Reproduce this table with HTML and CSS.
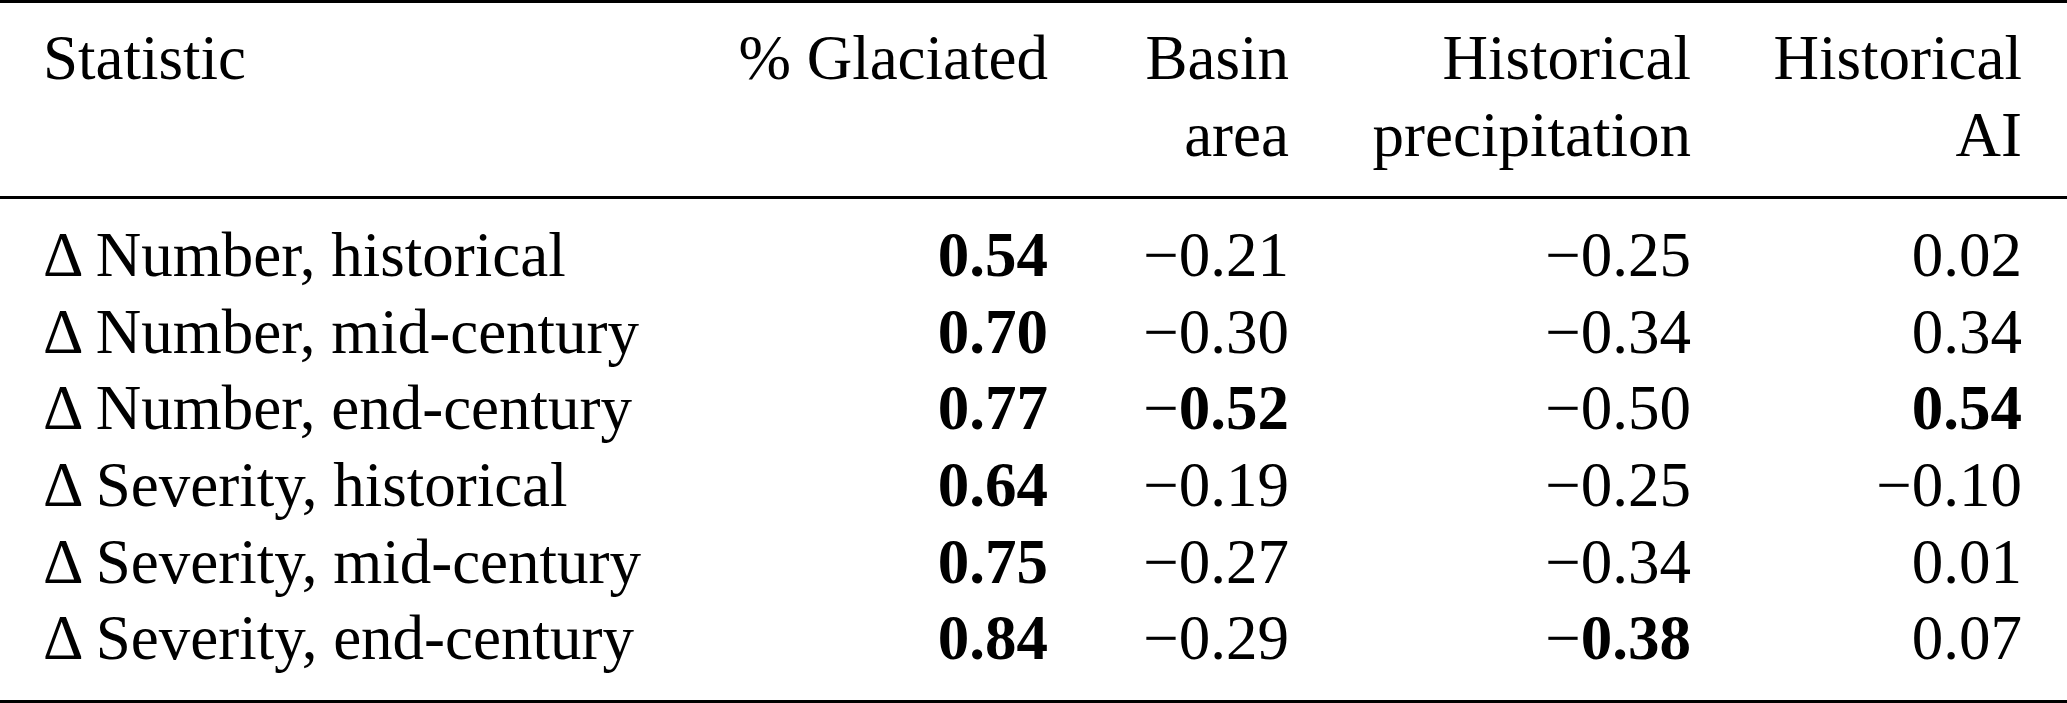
FILE: index.html
```html
<!DOCTYPE html>
<html lang="en">
<head>
<meta charset="utf-8">
<title>Correlation table</title>
<link rel="stylesheet" href="styles.css">
</head>
<body>
<div class="table">
  <div class="rule top"></div>
  <div class="grid head">
    <div class="cell left">Statistic</div>
    <div class="cell">% Glaciated</div>
    <div class="cell">Basin<br>area</div>
    <div class="cell">Historical<br>precipitation</div>
    <div class="cell">Historical<br>AI</div>
  </div>
  <div class="rule mid"></div>
  <div class="grid body">
    <div class="cell left">Δ Number, historical</div>
    <div class="cell b">0.54</div>
    <div class="cell">−0.21</div>
    <div class="cell">−0.25</div>
    <div class="cell">0.02</div>

    <div class="cell left">Δ Number, mid-century</div>
    <div class="cell b">0.70</div>
    <div class="cell">−0.30</div>
    <div class="cell">−0.34</div>
    <div class="cell">0.34</div>

    <div class="cell left">Δ Number, end-century</div>
    <div class="cell b">0.77</div>
    <div class="cell">−<b>0.52</b></div>
    <div class="cell">−0.50</div>
    <div class="cell b">0.54</div>

    <div class="cell left">Δ Severity, historical</div>
    <div class="cell b">0.64</div>
    <div class="cell">−0.19</div>
    <div class="cell">−0.25</div>
    <div class="cell">−0.10</div>

    <div class="cell left">Δ Severity, mid-century</div>
    <div class="cell b">0.75</div>
    <div class="cell">−0.27</div>
    <div class="cell">−0.34</div>
    <div class="cell">0.01</div>

    <div class="cell left">Δ Severity, end-century</div>
    <div class="cell b">0.84</div>
    <div class="cell">−0.29</div>
    <div class="cell">−<b>0.38</b></div>
    <div class="cell">0.07</div>
  </div>
  <div class="rule bottom"></div>
</div>
</body>
</html>
```

FILE: styles.css
```css
html, body {
  margin: 0;
  padding: 0;
  background: #ffffff;
}

body {
  width: 2067px;
  height: 703px;
  overflow: hidden;
  font-family: "Liberation Serif", "Times New Roman", serif;
  font-size: 63px;
  line-height: 76.6px;
  color: #000000;
}

.table {
  display: flex;
  flex-direction: column;
}

.rule {
  height: 3px;
  background: #000000;
}

.grid {
  display: grid;
  grid-template-columns: 605px 400px 241px 402px 331px;
  padding: 0 45px 0 43px;
}

.head {
  padding-top: 17px;
  padding-bottom: 23px;
}

.body {
  padding-top: 18px;
  padding-bottom: 23px;
}

.cell {
  text-align: right;
  white-space: nowrap;
}

.cell.left {
  text-align: left;
}

.cell.b,
.cell b {
  font-weight: bold;
}
```
